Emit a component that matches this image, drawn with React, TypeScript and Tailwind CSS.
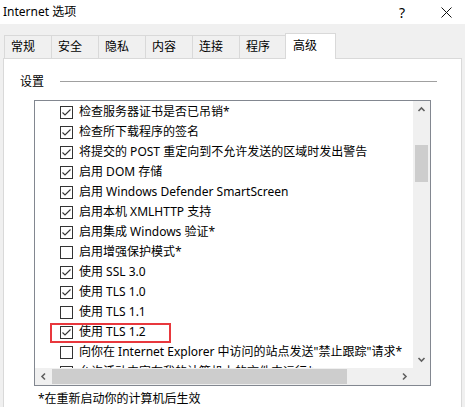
const rows: { label: string; checked: boolean; marked?: boolean }[] = [
  { label: "检查服务器证书是否已吊销*", checked: true },
  { label: "检查所下载程序的签名", checked: true },
  { label: "将提交的 POST 重定向到不允许发送的区域时发出警告", checked: true },
  { label: "启用 DOM 存储", checked: true },
  { label: "启用 Windows Defender SmartScreen", checked: true },
  { label: "启用本机 XMLHTTP 支持", checked: true },
  { label: "启用集成 Windows 验证*", checked: true },
  { label: "启用增强保护模式*", checked: false },
  { label: "使用 SSL 3.0", checked: true },
  { label: "使用 TLS 1.0", checked: true },
  { label: "使用 TLS 1.1", checked: false },
  { label: "使用 TLS 1.2", checked: true, marked: true },
  { label: "向你在 Internet Explorer 中访问的站点发送\"禁止跟踪\"请求*", checked: false },
  { label: "允许活动内容在我的计算机上的文件中运行*", checked: false },
];

const tabs = ["常规", "安全", "隐私", "内容", "连接", "程序"];

function CheckBox({ checked }: { checked: boolean }) {
  return (
    <div className="w-[13px] h-[13px] border border-[#333333] bg-white flex items-center justify-center shrink-0">
      {checked && (
        <svg width="11" height="11" viewBox="0 0 11 11">
          <polyline points="1.5,5.5 4,8 9.5,2.5" fill="none" stroke="#333333" strokeWidth="1.1" />
        </svg>
      )}
    </div>
  );
}

function Chevron({ dir }: { dir: "up" | "down" | "left" | "right" }) {
  const pts = {
    up: "1.5,6 4.5,3 7.5,6",
    down: "1.5,3 4.5,6 7.5,3",
    left: "6,1.5 3,4.5 6,7.5",
    right: "3,1.5 6,4.5 3,7.5",
  }[dir];
  return (
    <svg width="9" height="9" viewBox="0 0 9 9">
      <polyline points={pts} fill="none" stroke="#606060" strokeWidth="1.6" />
    </svg>
  );
}

export default function App() {
  return (
    <div
      className="w-[465px] h-[407px] bg-[#f0f0f0] overflow-hidden flex flex-col text-[12px] text-black"
      style={{ fontFamily: '"Noto Sans", "Noto Sans CJK SC", sans-serif' }}
    >
      {/* title bar */}
      <div className="h-[24px] bg-white flex items-center pl-[3px] shrink-0">
        <span>Internet 选项</span>
        <span className="ml-auto text-[14px] mr-[36px]">?</span>
        <svg width="11" height="11" viewBox="0 0 11 11" className="mr-[13px]">
          <path d="M0.5 0.5 L10.5 10.5 M10.5 0.5 L0.5 10.5" stroke="#111" strokeWidth="1" />
        </svg>
      </div>

      {/* tabs */}
      <div className="mt-[9px] h-[25px] flex items-end pl-[4px] shrink-0">
        {tabs.map((t) => (
          <div
            key={t}
            className="w-[48px] h-[23px] -mr-px border border-b-0 border-[#d9d9d9] flex items-center pl-[6px]"
          >
            {t}
          </div>
        ))}
        <div className="relative z-10 w-[51px] h-[26px] -mb-px -ml-[1px] bg-white border border-b-0 border-[#d9d9d9] flex items-center pl-[7px] pb-[2px]">
          高级
        </div>
      </div>

      {/* panel */}
      <div className="mx-[3px] flex-1 bg-white border border-[#d9d9d9] flex flex-col">
        <div className="mt-[14px] flex items-center pl-[16px] pr-[24px] h-[18px]">
          <span>设置</span>
          <div className="ml-[16px] flex-1 h-px bg-[#a0a0a0] -mt-[1px]" />
        </div>

        <div className="ml-[30px] mt-[9px] w-[397px] h-[286px] border border-[#828790] flex flex-col">
          <div className="flex flex-1 min-h-0">
            <div className="flex-1 overflow-hidden pt-px">
              {rows.map((r) => (
                <div key={r.label} className="relative h-[20px] flex items-center pl-[25px] gap-[6px] whitespace-nowrap">
                  <CheckBox checked={r.checked} />
                  <span>{r.label}</span>
                  {r.marked && (
                    <div className="absolute left-[15px] top-px w-[121px] h-[20px] border-2 border-[#e8383d]" />
                  )}
                </div>
              ))}
            </div>
            {/* vertical scrollbar */}
            <div className="w-[17px] bg-[#f0f0f0] flex flex-col shrink-0">
              <div className="h-[17px] flex items-center justify-center">
                <Chevron dir="up" />
              </div>
              <div className="mt-[27px] h-[37px] bg-[#cdcdcd] mx-[2px]" />
              <div className="mt-auto h-[17px] flex items-center justify-center">
                <Chevron dir="down" />
              </div>
            </div>
          </div>
          {/* horizontal scrollbar */}
          <div className="h-[17px] flex shrink-0">
            <div className="flex-1 bg-[#f0f0f0] flex items-center">
              <div className="w-[17px] flex items-center justify-center">
                <Chevron dir="left" />
              </div>
              <div className="w-[295px] h-[15px] bg-[#cdcdcd]" />
              <div className="ml-auto w-[17px] flex items-center justify-center">
                <Chevron dir="right" />
              </div>
            </div>
            <div className="w-[17px] bg-[#f0f0f0]" />
          </div>
        </div>

        <div className="ml-[34px] mt-[4px]">*在重新启动你的计算机后生效</div>
      </div>
    </div>
  );
}
